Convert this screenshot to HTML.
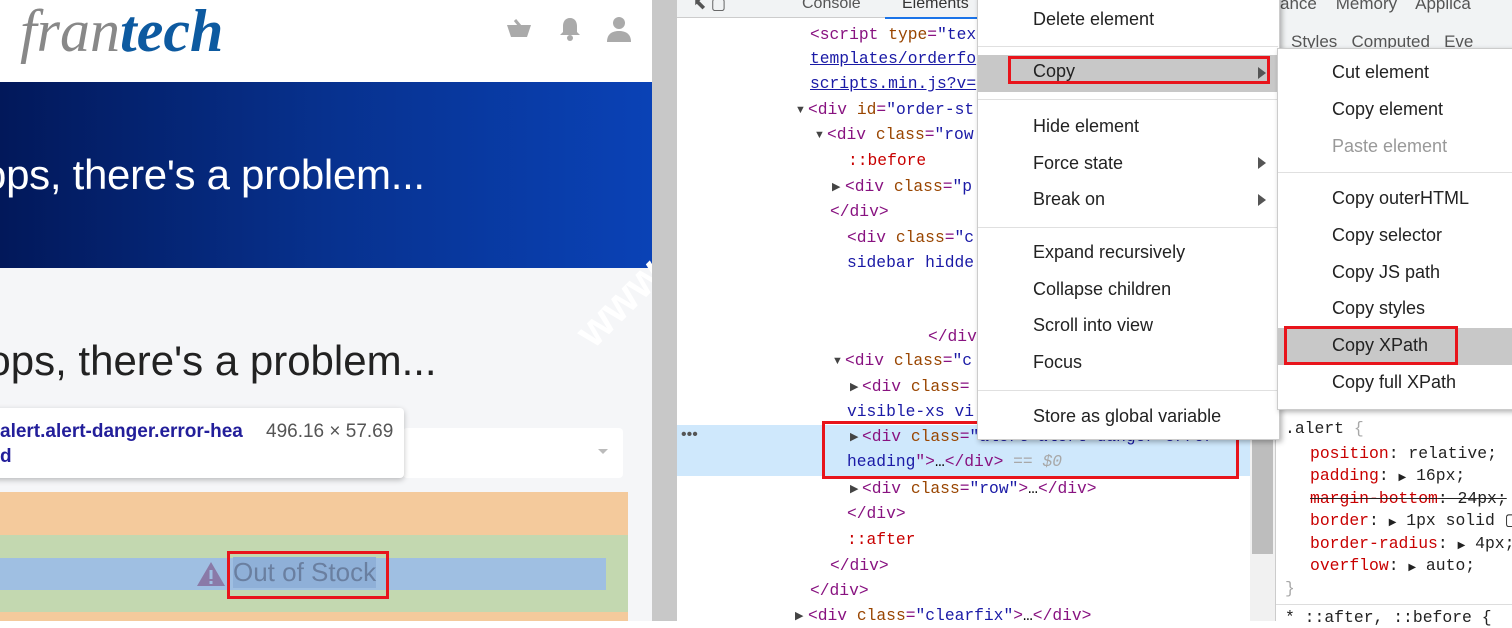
<!DOCTYPE html>
<html><head><meta charset="utf-8"><style>
*{margin:0;padding:0;box-sizing:border-box}
body{width:1512px;height:621px;overflow:hidden;position:relative;background:#fff;font-family:"Liberation Sans",sans-serif}
.a{position:absolute}
.c{position:absolute;font-family:"Liberation Mono",monospace;font-size:16.3px;white-space:pre;line-height:20px}
.t{color:#881280}.at{color:#994500}.v{color:#1a1aa6}.g{color:#a8a8a8}.ps{color:#c80000}
.tr{position:absolute;font-size:11px;color:#444;line-height:20px}
.mi{position:absolute;left:1033px;font-size:18px;color:#222;white-space:nowrap}
.si{position:absolute;left:1332px;font-size:18px;color:#222;white-space:nowrap}
.sep{position:absolute;height:1px;background:#e0e0e0}
.tri{position:absolute;width:0;height:0;border-top:6px solid transparent;border-bottom:6px solid transparent;border-left:8px solid #555}
.red{position:absolute;border:3px solid #e8141b}
.sp{color:#c80000}
.s{position:absolute;font-family:"Liberation Mono",monospace;font-size:16.4px;white-space:pre;line-height:20px;color:#222}
</style></head><body>
<!-- left page -->
<div class="a" style="left:0;top:0;width:652px;height:82px;background:#fff"></div>
<div class="a" style="left:20px;top:-4px;font-family:'Liberation Serif',serif;font-style:italic;font-size:60px;line-height:70px;white-space:nowrap"><span style="color:#888">fran</span><span style="color:#0d5aa0;font-weight:bold">tech</span></div>
<svg class="a" style="left:505px;top:17px" width="28" height="24" viewBox="0 0 28 24"><path d="M2 8h24l-4 12H6z" fill="#aaa"/><path d="M10 3l5 6" stroke="#aaa" stroke-width="3"/></svg>
<svg class="a" style="left:558px;top:16px" width="24" height="26" viewBox="0 0 24 26"><path d="M12 2c-5 0-7 4-7 8v6l-3 3h20l-3-3v-6c0-4-2-8-7-8z" fill="#aaa"/><circle cx="12" cy="22" r="3" fill="#aaa"/></svg>
<svg class="a" style="left:606px;top:15px" width="26" height="28" viewBox="0 0 26 28"><circle cx="13" cy="8" r="6" fill="#aaa"/><path d="M1 27c0-8 5-11 12-11s12 3 12 11z" fill="#aaa"/></svg>
<div class="a" style="left:0;top:82px;width:652px;height:186px;background:linear-gradient(90deg,#02185a,#07318e 50%,#0a42b6)"></div>
<div class="a" style="left:-40px;top:151px;font-size:42px;color:#fff;white-space:nowrap;letter-spacing:-0.3px">oops, there's a problem...</div>
<div class="a" style="left:0;top:268px;width:652px;height:353px;background:#f5f6f8"></div>
<div class="a" style="left:-36px;top:337px;font-size:42px;color:#222;white-space:nowrap;letter-spacing:0px">oops, there's a problem...</div>
<div class="a" style="left:403px;top:428px;width:220px;height:50px;background:#fff;border-radius:4px"></div>
<div class="a" style="left:598px;top:449px;border-left:5px solid transparent;border-right:5px solid transparent;border-top:5px solid #bbb"></div>
<div class="a" style="left:-10px;top:408px;width:414px;height:70px;background:#fff;border-radius:4px;box-shadow:0 2px 6px rgba(0,0,0,.25)"></div>
<div class="a" style="left:0;top:421px;font-size:19px;font-weight:bold;color:#221e9a;white-space:nowrap">alert.alert-danger.error-hea</div>
<div class="a" style="left:0;top:446px;font-size:19px;font-weight:bold;color:#221e9a">d</div>
<div class="a" style="left:266px;top:421px;font-size:19px;color:#555;white-space:nowrap">496.16 × 57.69</div>
<div class="a" style="left:0;top:492px;width:628px;height:43px;background:#f4ca9c"></div>
<div class="a" style="left:0;top:535px;width:628px;height:77px;background:#c3d8b0"></div>
<div class="a" style="left:0;top:558px;width:606px;height:32px;background:#9fbfe2"></div>
<div class="a" style="left:0;top:612px;width:628px;height:9px;background:#f4ca9c"></div>
<svg class="a" style="left:196px;top:561px" width="30" height="26" viewBox="0 0 30 26"><path d="M15 1L29 25H1z" fill="#8a7aa8"/><rect x="13.5" y="9" width="3" height="9" fill="#9fbfe2"/><rect x="13.5" y="20" width="3" height="3" fill="#9fbfe2"/></svg>
<div class="a" style="left:233px;top:557px;font-size:26px;color:#6a7fa0;white-space:nowrap;background:#8fb0d8">Out of Stock</div>
<div class="red" style="left:227px;top:551px;width:162px;height:48px"></div>
<div class="a" style="left:566px;top:322px;font-size:44px;font-weight:bold;color:#fff;transform:rotate(-45deg);transform-origin:left top;white-space:nowrap">www.v</div>
<!-- scrollbar -->
<div class="a" style="left:652px;top:0;width:25px;height:621px;background:#c8c8c8"></div>
<!-- devtools -->
<div class="a" style="left:677px;top:0;width:600px;height:18px;background:#f1f3f4;border-bottom:1px solid #ccc"></div>
<div class="a" style="left:693px;top:-6px;font-size:16px;color:#555">⬉ ▢</div>
<div class="a" style="left:802px;top:-5px;font-size:16px;color:#555">Console</div>
<div class="a" style="left:902px;top:-5px;font-size:16px;color:#333">Elements</div>
<div class="a" style="left:885px;top:17px;width:92px;height:2px;background:#1a73e8"></div>
<div class="a" style="left:677px;top:425px;width:573px;height:51px;background:#cfe8fc"></div>
<div class="a" style="left:681px;top:426px;font-size:16px;color:#555">•••</div>

<div class="c" style="left:810px;top:25px"><span class="t">&lt;script</span> <span class="at">type</span><span class="t">=</span><span class="v">"tex</span></div>
<div class="c" style="left:810px;top:49px"><u class="v">templates/orderfo</u></div>
<div class="c" style="left:810px;top:74px"><u class="v">scripts.min.js?v=</u></div>
<div class="tr" style="left:795px;top:100px">▼</div><div class="c" style="left:808px;top:100px"><span class="t">&lt;div</span> <span class="at">id</span><span class="t">=</span><span class="v">"order-st</span></div>
<div class="tr" style="left:814px;top:125px">▼</div><div class="c" style="left:827px;top:125px"><span class="t">&lt;div</span> <span class="at">class</span><span class="t">=</span><span class="v">"row</span></div>
<div class="c" style="left:848px;top:151px"><span class="ps">::before</span></div>
<div class="tr" style="left:832px;top:177px">▶</div><div class="c" style="left:845px;top:177px"><span class="t">&lt;div</span> <span class="at">class</span><span class="t">=</span><span class="v">"p</span></div>
<div class="c" style="left:830px;top:202px"><span class="t">&lt;/div&gt;</span></div>
<div class="c" style="left:847px;top:228px"><span class="t">&lt;div</span> <span class="at">class</span><span class="t">=</span><span class="v">"c</span></div>
<div class="c" style="left:847px;top:253px"><span class="v">sidebar hidde</span></div>
<div class="c" style="left:928px;top:327px"><span class="t">&lt;/div</span></div>
<div class="tr" style="left:832px;top:351px">▼</div><div class="c" style="left:845px;top:351px"><span class="t">&lt;div</span> <span class="at">class</span><span class="t">=</span><span class="v">"c</span></div>
<div class="tr" style="left:850px;top:377px">▶</div><div class="c" style="left:862px;top:377px"><span class="t">&lt;div</span> <span class="at">class</span><span class="t">=</span></div>
<div class="c" style="left:847px;top:402px"><span class="v">visible-xs vi</span></div>
<div class="tr" style="left:850px;top:427px">▶</div><div class="c" style="left:862px;top:427px"><span class="t">&lt;div</span> <span class="at">class</span><span class="t">=</span><span class="v">"alert alert-danger error</span></div>
<div class="c" style="left:847px;top:452px"><span class="v">heading</span><span class="t">"&gt;</span>…<span class="t">&lt;/div&gt;</span> <span class="g">== <i>$0</i></span></div>
<div class="tr" style="left:850px;top:479px">▶</div><div class="c" style="left:862px;top:479px"><span class="t">&lt;div</span> <span class="at">class</span><span class="t">=</span><span class="v">"row"</span><span class="t">&gt;</span>…<span class="t">&lt;/div&gt;</span></div>
<div class="c" style="left:847px;top:504px"><span class="t">&lt;/div&gt;</span></div>
<div class="c" style="left:847px;top:530px"><span class="ps">::after</span></div>
<div class="c" style="left:830px;top:556px"><span class="t">&lt;/div&gt;</span></div>
<div class="c" style="left:810px;top:581px"><span class="t">&lt;/div&gt;</span></div>
<div class="tr" style="left:795px;top:606px">▶</div><div class="c" style="left:808px;top:606px"><span class="t">&lt;div</span> <span class="at">class</span><span class="t">=</span><span class="v">"clearfix"</span><span class="t">&gt;</span>…<span class="t">&lt;/div&gt;</span></div>

<div class="red" style="left:822px;top:421px;width:417px;height:58px"></div>
<div class="a" style="left:1250px;top:40px;width:25px;height:581px;background:#f1f1f1"></div>
<div class="a" style="left:1252px;top:420px;width:21px;height:134px;background:#bdbdbd"></div>
<!-- styles pane -->
<div class="a" style="left:1275px;top:0;width:237px;height:621px;background:#fff;border-left:1px solid #ccc"></div>
<div class="a" style="left:1275px;top:0;width:237px;height:18px;background:#f1f3f4"></div>
<div class="a" style="left:1280px;top:-6px;font-size:17px;color:#555;white-space:nowrap">ance&nbsp;&nbsp;&nbsp; Memory&nbsp;&nbsp;&nbsp; Applica</div>
<div class="a" style="left:1275px;top:18px;width:237px;height:34px;background:#f1f3f4;border-bottom:1px solid #ccc"></div>
<div class="a" style="left:1291px;top:32px;font-size:17px;color:#555;white-space:nowrap">Styles&nbsp;&nbsp; Computed&nbsp;&nbsp; Eve</div>
<div class="s" style="left:1285px;top:419px">.alert <span class="g">{</span></div>
<div class="s" style="left:1310px;top:444px"><span class="sp">position</span>: relative;</div>
<div class="s" style="left:1310px;top:466px"><span class="sp">padding</span>: <span style="font-size:10px">▶</span> 16px;</div>
<div class="s" style="left:1310px;top:489px"><s><span class="sp">margin-bottom</span>: 24px;</s></div>
<div class="s" style="left:1310px;top:511px"><span class="sp">border</span>: <span style="font-size:10px">▶</span> 1px solid ▢</div>
<div class="s" style="left:1310px;top:534px"><span class="sp">border-radius</span>: <span style="font-size:10px">▶</span> 4px;</div>
<div class="s" style="left:1310px;top:556px"><span class="sp">overflow</span>: <span style="font-size:10px">▶</span> auto;</div>
<div class="s" style="left:1285px;top:579px"><span class="g">}</span></div>
<div class="a" style="left:1276px;top:604px;width:236px;height:1px;background:#ddd"></div>
<div class="s" style="left:1285px;top:608px">* ::after, ::before {</div>
<!-- context menu -->
<div class="a" style="left:977px;top:-5px;width:303px;height:445px;background:#fff;border:1px solid #ccc;box-shadow:2px 2px 5px rgba(0,0,0,.3)"></div>
<div class="a" style="left:978px;top:55px;width:300px;height:37px;background:#c8c8c8"></div>
<div class="mi" style="top:9px">Delete element</div>
<div class="sep" style="left:978px;top:46px;width:300px"></div>
<div class="mi" style="top:61px">Copy</div>
<div class="tri" style="left:1258px;top:67px"></div>
<div class="sep" style="left:978px;top:99px;width:300px"></div>
<div class="mi" style="top:116px">Hide element</div>
<div class="mi" style="top:153px">Force state</div><div class="tri" style="left:1258px;top:157px"></div>
<div class="mi" style="top:189px">Break on</div><div class="tri" style="left:1258px;top:194px"></div>
<div class="sep" style="left:978px;top:227px;width:300px"></div>
<div class="mi" style="top:242px">Expand recursively</div>
<div class="mi" style="top:279px">Collapse children</div>
<div class="mi" style="top:315px">Scroll into view</div>
<div class="mi" style="top:352px">Focus</div>
<div class="sep" style="left:978px;top:390px;width:300px"></div>
<div class="mi" style="top:406px">Store as global variable</div>
<div class="red" style="left:1008px;top:56px;width:262px;height:28px"></div>
<!-- submenu -->
<div class="a" style="left:1277px;top:48px;width:240px;height:362px;background:#fff;border:1px solid #ccc;box-shadow:2px 2px 5px rgba(0,0,0,.3)"></div>
<div class="a" style="left:1278px;top:328px;width:234px;height:37px;background:#c8c8c8"></div>
<div class="si" style="top:62px">Cut element</div>
<div class="si" style="top:99px">Copy element</div>
<div class="si" style="top:136px;color:#999">Paste element</div>
<div class="sep" style="left:1278px;top:172px;width:234px"></div>
<div class="si" style="top:188px">Copy outerHTML</div>
<div class="si" style="top:225px">Copy selector</div>
<div class="si" style="top:262px">Copy JS path</div>
<div class="si" style="top:298px">Copy styles</div>
<div class="si" style="top:335px">Copy XPath</div>
<div class="si" style="top:372px">Copy full XPath</div>
<div class="red" style="left:1284px;top:326px;width:174px;height:39px"></div>
</body></html>
